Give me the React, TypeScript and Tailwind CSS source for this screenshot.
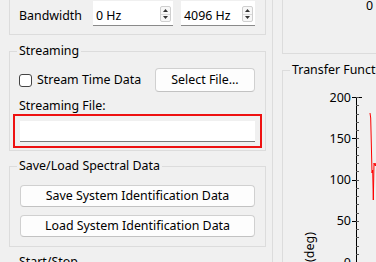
import type { ReactNode } from 'react';

function Group({ title, className = '', children }: { title?: string; className?: string; children?: ReactNode }) {
  return (
    <div className={`relative border border-[#dcdcdc] ${className}`}>
      {title && (
        <span className="absolute left-[7px] top-[-9px] whitespace-nowrap bg-[#f0f0f0] px-[2px] leading-[16px]">{title}</span>
      )}
      {children}
    </div>
  );
}

function Spinner() {
  return (
    <div className="mb-[3px] flex h-[16px] w-[11px] shrink-0 flex-col self-end overflow-hidden rounded-[2px] border border-[#cfcfcf] bg-[#f7f7f7]">
      <div className="flex flex-1 items-center justify-center border-b border-[#d9d9d9]">
        <svg width="5" height="3" viewBox="0 0 5 3">
          <path d="M0 3 L2.5 0 L5 3Z" fill="#333" />
        </svg>
      </div>
      <div className="flex flex-1 items-center justify-center">
        <svg width="5" height="3" viewBox="0 0 5 3">
          <path d="M0 0 L2.5 3 L5 0Z" fill="#333" />
        </svg>
      </div>
    </div>
  );
}

function SpinBox({ value, className }: { value: string; className: string }) {
  return (
    <div className={`flex h-[25px] justify-between border-b border-[#8a8a8a] bg-white pl-[3px] pr-[2px] ${className}`}>
      <span className="mb-[1px] self-end leading-[16px]">{value}</span>
      <Spinner />
    </div>
  );
}

function Button({ label, className = '' }: { label: string; className?: string }) {
  return (
    <div className={`flex items-center justify-center rounded-[4px] border border-[#d0d0d0] border-b-[#c2c2c2] bg-[#fdfdfd] leading-[16px] ${className}`}>
      {label}
    </div>
  );
}

// escala del eje de fase: 200 arriba, 0 abajo
const Y = (v: number) => 26 + (200 - v) * 0.826;

const phase = '87,42 87.7,47 88.3,72 89,102 89.7,99 90.3,129 91,92 92.3,95 93,92 94,97 95,90 96,94';

function PhaseChart() {
  const majors = [200, 150, 100, 50, 0];
  const minors = Array.from({ length: 21 }, (_, i) => i * 10);
  return (
    <svg width="100" height="191" className="block">
      <line x1="73.5" y1="26" x2="73.5" y2="191" stroke="#000" />
      <line x1="73" y1="26.5" x2="79" y2="26.5" stroke="#000" />
      {minors.map((v) => (
        <line key={v} x1="73" y1={Math.round(Y(v)) + 0.5} x2="76" y2={Math.round(Y(v)) + 0.5} stroke="#555" />
      ))}
      {majors.map((v) => (
        <g key={v}>
          <line x1="69" y1={Math.round(Y(v)) + 0.5} x2="73" y2={Math.round(Y(v)) + 0.5} stroke="#000" />
          <text x="68" y={Y(v) + 4.5} textAnchor="end" fontSize="12.5" fill="#000">
            {v}
          </text>
        </g>
      ))}
      <text x="31" y="161" textAnchor="end" fontSize="12.5" fill="#000" transform="rotate(-90 31 161)">
        Phase (deg)
      </text>
      <polyline points={phase} fill="none" stroke="#ff0000" strokeWidth="1" />
    </svg>
  );
}

export default function App() {
  return (
    <div className="flex h-[262px] w-[376px] overflow-hidden bg-[#f0f0f0] font-['Noto_Sans',sans-serif] text-[12.4px] text-black">
      {/* panel izquierdo */}
      <div className="w-[273px] shrink-0 border-r border-[#dcdcdc] pl-[9px] pr-[6px]">
        <Group className="-mt-[20px] flex h-[55px] items-end px-[9px] pb-[8px]">
          <div className="flex h-[25px] w-full">
            <span className="mb-[2px] w-[74px] self-end leading-[16px]">Bandwidth</span>
            <SpinBox value="0 Hz" className="w-[80px]" />
            <SpinBox value="4096 Hz" className="ml-[8px] w-[74px]" />
          </div>
        </Group>

        <Group title="Streaming" className="mt-[16px] px-[9px] pb-[2px] pt-[16px]">
          <div className="flex h-[24px] items-center justify-between">
            <label className="flex items-center gap-[5px] leading-[16px]">
              <span className="h-[13px] w-[13px] rounded-[3px] border border-[#444] bg-white" />
              Stream Time Data
            </label>
            <Button label="Select File..." className="mr-[1px] h-[24px] w-[100px]" />
          </div>
          <div className="mt-[6px] leading-[16px]">Streaming File:</div>
          <div className="-mx-[6px] border-2 border-[#ee1111] px-[5px] pb-[4px] pt-[5px]">
            <div className="h-[21px] border-b border-[#7a7a7a] bg-white" />
          </div>
        </Group>

        <Group title="Save/Load Spectral Data" className="mt-[15px] flex flex-col gap-[8px] px-[10px] pb-[9px] pt-[18px]">
          <Button label="Save System Identification Data" className="h-[22px]" />
          <Button label="Load System Identification Data" className="h-[22px]" />
        </Group>

        <Group title="Start/Stop" className="mt-[15px] h-[60px]" />
      </div>

      {/* panel derecho */}
      <div className="min-w-0 flex-1 pl-[9px]">
        <Group className="-mt-[20px] h-[74px] w-[200px] pt-[17px]">
          <div className="ml-[83px] leading-[16px]">0</div>
        </Group>
        <Group title="Transfer Function Phase" className="mt-[16px] h-[300px] w-[200px]">
          <PhaseChart />
        </Group>
      </div>
    </div>
  );
}
